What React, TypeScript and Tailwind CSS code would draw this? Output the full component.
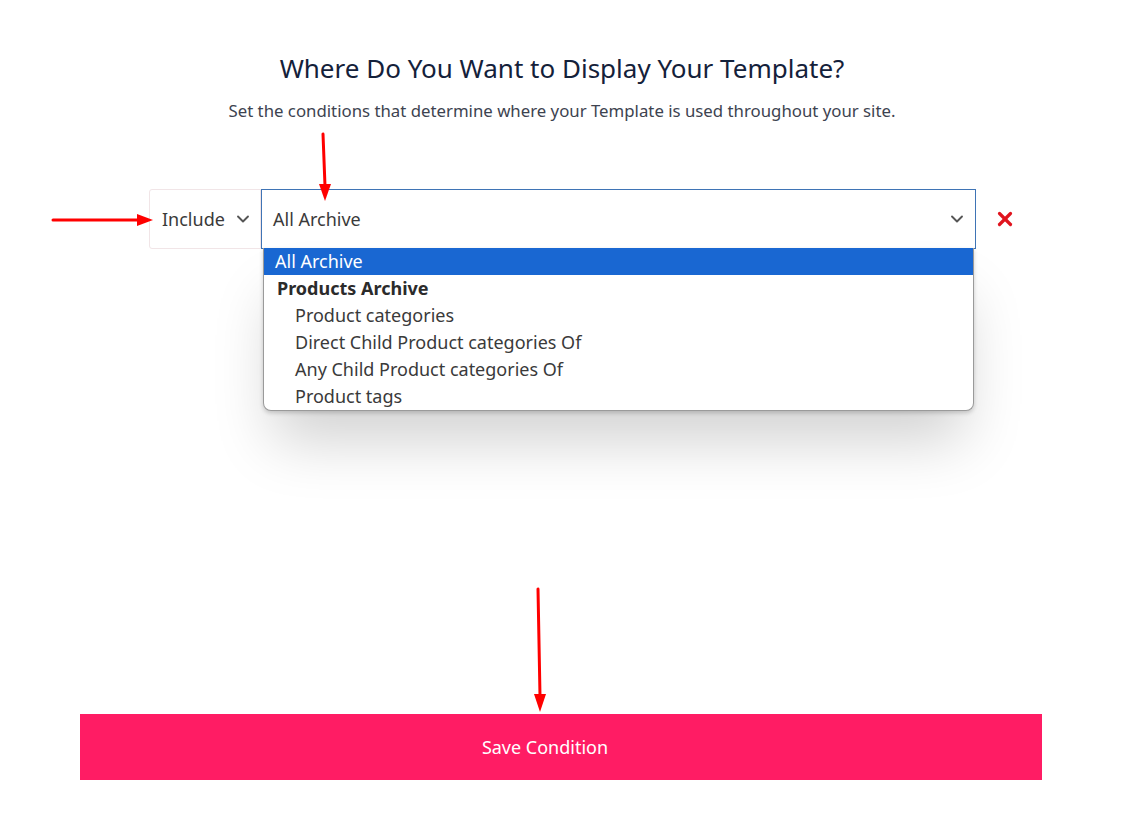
import { ChevronDown, X } from "lucide-react";

const options = [
  { label: "All Archive", kind: "active" },
  { label: "Products Archive", kind: "group" },
  { label: "Product categories", kind: "child" },
  { label: "Direct Child Product categories Of", kind: "child" },
  { label: "Any Child Product categories Of", kind: "child" },
  { label: "Product tags", kind: "child" },
];

const optionClass = (kind: string) => {
  switch (kind) {
    case "active":
      return "bg-[#1967d2] pl-[11px] text-white";
    case "group":
      return "pl-[13px] font-bold text-[#2b2b2b]";
    default:
      return "pl-[31px] text-[#3a3a3a]";
  }
};

const Arrows = () => (
  <svg
    className="pointer-events-none absolute left-0 top-0"
    width={1124}
    height={820}
    viewBox="0 0 1124 820">
    <g stroke="#ff0000" strokeWidth={3} strokeLinecap="round">
      <line x1={53} y1={220} x2={140} y2={220} />
      <line x1={323} y1={134} x2={325} y2={186} />
      <line x1={538} y1={589} x2={540} y2={696} />
    </g>
    <g fill="#ff0000">
      <polygon points="153,220 137,214 137,226" />
      <polygon points="325,201 319,184 331,184" />
      <polygon points="540,712 534,694 546,694" />
    </g>
  </svg>
);

export default function App() {
  return (
    <div
      className="relative h-[820px] w-[1124px] overflow-hidden bg-white"
      style={{ fontFamily: '"Noto Sans", "Open Sans", sans-serif' }}>
      <div className="flex flex-col items-center pt-[50px]">
        <h1 className="text-[26px] leading-[36px] text-[#14213a]">
          Where Do You Want to Display Your Template?
        </h1>
        <p className="mt-[14px] text-[16.8px] leading-[22px] text-[#3d4350]">
          Set the conditions that determine where your Template is used
          throughout your site.
        </p>
      </div>

      {/* Condition row */}
      <div className="mt-[67px] flex items-center pl-[149px]">
        <div className="flex h-[60px] w-[112px] items-center gap-[8px] rounded-l-[3px] border border-[#f1e5e7] pl-[12px] text-[18px] text-[#3a3a3a]">
          Include
          <ChevronDown size={20} strokeWidth={2.25} className="text-[#555]" />
        </div>

        <div className="relative h-[60px] w-[715px]">
          <div className="flex h-full items-center justify-between border border-[#3f74b5] pl-[11px] pr-[8px] text-[18px] text-[#3a3a3a]">
            All Archive
            <ChevronDown size={20} strokeWidth={2.25} className="text-[#555]" />
          </div>

          {/* Dropdown */}
          <div className="absolute left-[2px] right-[2px] top-[59px] z-10 overflow-hidden rounded-b-[8px] border border-t-0 border-[#9a9a9a] bg-white shadow-[0_40px_60px_-10px_rgba(0,0,0,0.18),0_2px_4px_rgba(0,0,0,0.18)]">
            {options.map((o) => (
              <div
                key={o.label}
                className={`flex h-[27px] items-center text-[18px] ${optionClass(o.kind)}`}>
                {o.label}
              </div>
            ))}
          </div>
        </div>

        <X size={22} strokeWidth={3.5} className="ml-[18px] text-[#e0141e]" />
      </div>

      {/* Save button */}
      <div className="ml-[80px] mt-[465px] w-[962px]">
        <button className="flex h-[66px] w-full items-center justify-center bg-[#ff1c64] pr-[32px] text-[18px] text-white">
          Save Condition
        </button>
      </div>

      <Arrows />
    </div>
  );
}
